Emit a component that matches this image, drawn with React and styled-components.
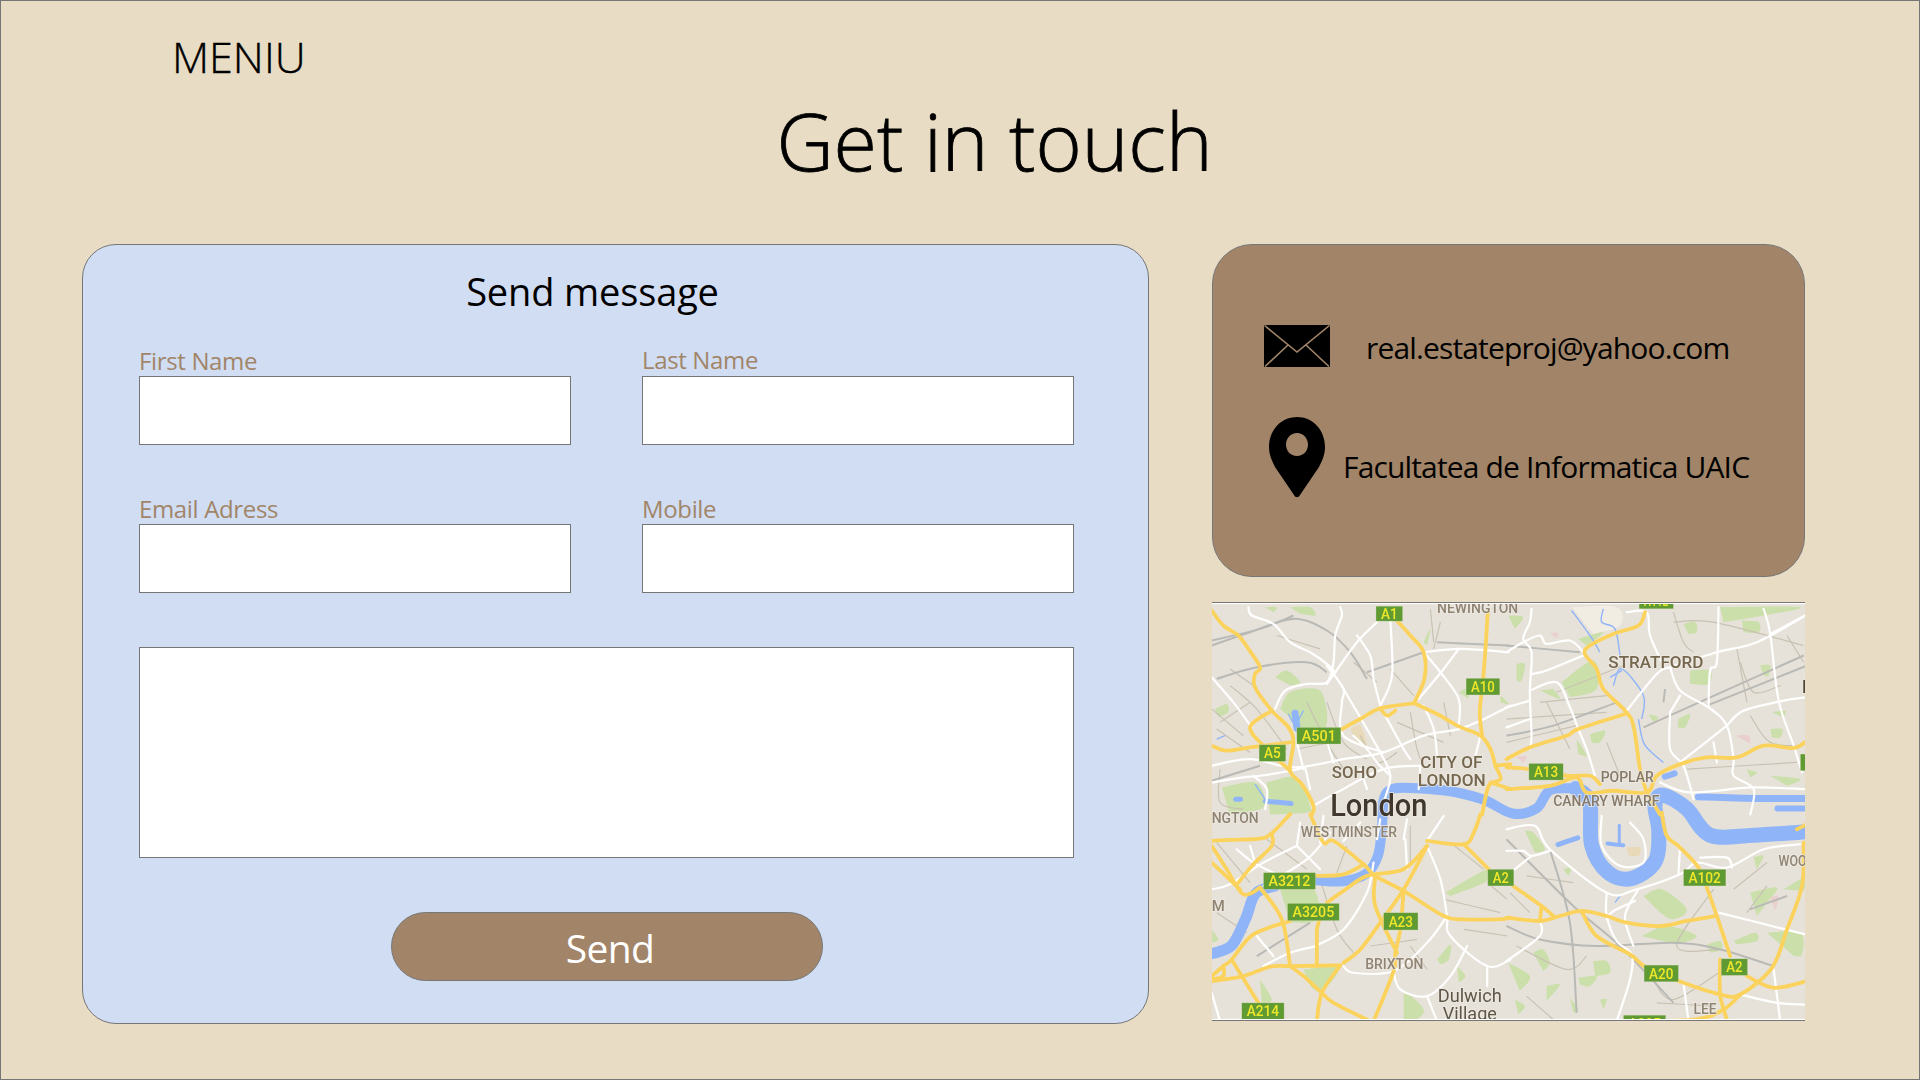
import React from 'react';
import styled, { createGlobalStyle } from 'styled-components';

const FONT = '"Open Sans", "Noto Sans", sans-serif';
const BROWN = '#a28568';
const LINE = '#767676';

const GlobalStyle = createGlobalStyle`
  html, body {
    margin: 0;
    padding: 0;
    background: #e8dcc5;
  }
  * {
    box-sizing: border-box;
  }
`;

// Styled components

const Page = styled.div`
  width: 1920px;
  height: 1080px;
  overflow: hidden;
  border: 1px solid ${LINE};
  background: #e8dcc5;
  font-family: ${FONT};
  color: #000;
`;

const Menu = styled.div`
  height: 64px;
  padding: 25px 0 0 171px;
  font-size: 43px;
  font-weight: 300;
  -webkit-text-stroke: 0.4px #000;
  line-height: 62px;
  letter-spacing: 0;
`;

const Title = styled.h1`
  margin: 0;
  padding: 24px 0 0 69px;
  height: 179px;
  font-size: 79px;
  font-weight: 300;
  -webkit-text-stroke: 0.8px #000;
  line-height: 104px;
  letter-spacing: 0;
  text-align: center;
`;

const Content = styled.main`
  display: grid;
  grid-template-columns: 1067px 593px;
  column-gap: 63px;
  padding-left: 81px;
`;

const FormCard = styled.form`
  display: flex;
  flex-direction: column;
  height: 780px;
  padding: 21px 0 0 56px;
  border: 1px solid ${LINE};
  border-radius: 34px;
  background: #d0ddf3;
`;

const FormTitle = styled.h2`
  width: 935px;
  margin: 0;
  padding-right: 28px;
  height: 80px;
  font-size: 38px;
  font-weight: 400;
  line-height: 50px;
  letter-spacing: -0.15px;
  text-align: center;
`;

const FieldGrid = styled.div`
  display: grid;
  grid-template-columns: 432px 432px;
  column-gap: 71px;
  row-gap: 49px;
`;

const Field = styled.label`
  display: flex;
  flex-direction: column;
`;

const LabelText = styled.span`
  height: 30px;
  font-size: 24px;
  line-height: 30px;
  letter-spacing: -0.35px;
  color: ${BROWN};
  transform: translateY(${({ $lift }) => ($lift ? -1 : 0)}px);
`;

const Input = styled.input`
  display: block;
  width: 432px;
  height: 69px;
  border: 1px solid ${LINE};
  border-radius: 0;
  background: #fff;
  outline: none;
`;

const Message = styled.textarea`
  display: block;
  width: 935px;
  height: 211px;
  margin-top: 54px;
  border: 1px solid ${LINE};
  border-radius: 0;
  background: #fff;
  outline: none;
  resize: none;
`;

const SendButton = styled.button`
  display: block;
  width: 432px;
  height: 69px;
  margin: 54px 0 0 252px;
  padding: 2px 0 0 6px;
  border: 1px solid ${LINE};
  border-radius: 35px;
  background: ${BROWN};
  color: #fff;
  font-family: ${FONT};
  font-size: 39px;
  line-height: 66px;
  letter-spacing: -0.6px;
`;

const Aside = styled.aside`
  display: flex;
  flex-direction: column;
  gap: 25px;
`;

const InfoCard = styled.section`
  display: flex;
  flex-direction: column;
  height: 333px;
  padding-top: 71px;
  border: 1px solid ${LINE};
  border-radius: 40px;
  background: ${BROWN};
`;

const InfoRow = styled.div`
  display: flex;
  align-items: ${({ $end }) => ($end ? 'flex-end' : 'center')};
  gap: ${({ $gap }) => $gap}px;
  height: ${({ $height }) => $height}px;
  padding-left: ${({ $left }) => $left}px;
`;

const InfoText = styled.span`
  font-size: 30px;
  line-height: 44px;
  letter-spacing: -0.85px;
  white-space: nowrap;
  position: relative;
  top: ${({ $shift }) => $shift || 0}px;
`;

const MapFrame = styled.figure`
  width: 593px;
  height: 419px;
  margin: 0;
  padding: 1px 0;
  border-top: 1px solid ${LINE};
  border-bottom: 1px solid ${LINE};
  background: #fff;
  overflow: hidden;

  svg {
    display: block;
  }
`;

// Map drawing. Points are read off crops of the map at 3x. Lists with
// a, b, c, d come from the four quarter crops, z from the whole-map crop.

const ORIGIN = { a: [-2, -2], b: [294, -2], c: [-2, 208], d: [294, 208] };

const toMap = (q, x, y) =>
  q === 'z'
    ? [(x - 30) / 2.533, (y - 38) / 3]
    : [ORIGIN[q][0] + x / 3, ORIGIN[q][1] + y / 3];

const parse = (line) => {
  const [q, ...rest] = line.trim().split(/\s+/);
  return rest.map((p) => {
    const [x, y] = p.split(',').map(Number);
    return toMap(q, x, y);
  });
};

const smooth = (pts) => {
  let d = `M${pts[0][0].toFixed(1)} ${pts[0][1].toFixed(1)}`;
  for (let i = 0; i < pts.length - 1; i++) {
    const p0 = pts[i - 1] || pts[i];
    const p1 = pts[i];
    const p2 = pts[i + 1];
    const p3 = pts[i + 2] || p2;
    const c1 = [p1[0] + (p2[0] - p0[0]) / 6, p1[1] + (p2[1] - p0[1]) / 6];
    const c2 = [p2[0] - (p3[0] - p1[0]) / 6, p2[1] - (p3[1] - p1[1]) / 6];
    d += `C${c1[0].toFixed(1)} ${c1[1].toFixed(1)} ${c2[0].toFixed(1)} ${c2[1].toFixed(1)} ${p2[0].toFixed(1)} ${p2[1].toFixed(1)}`;
  }
  return d;
};

const area = (line) => smooth(parse(line)) + 'Z';

const PARKS = [
  'a 210,320 240,270 320,260 345,300 345,375 270,380 235,340',
  'a 195,225 230,205 270,240 240,250',
  'a 15,320 50,305 55,330 25,345',
  'a 165,15 200,15 190,30',
  'a 240,15 300,15 315,40 270,35',
  'a 35,555 135,540 165,590 150,620 60,636',
  'a 170,540 260,525 300,610 290,630 180,636',
  'a 640,120 660,80 650,130',
  'a 745,270 770,260 775,290',
  'a 870,280 895,305 870,300',
  'b 165,240 260,175 270,260 190,285',
  'b 100,265 160,290 140,260',
  'b 215,110 290,90 240,130',
  'b 530,65 565,60 570,90 545,95',
  'b 705,55 755,60 755,90 710,90',
  'b 640,15 880,15 770,40 650,60',
  'b 550,205 610,205 605,245 550,245',
  'b 515,350 550,335 535,375 512,375',
  'b 30,185 55,185 45,235 30,235',
  'b 250,395 295,385 280,420 255,420',
  'b 425,335 455,345 440,360',
  'b 760,190 790,190 785,220 770,220',
  'b 790,380 825,380 820,405 795,405',
  'b 795,330 835,325 830,345',
  'b 210,410 240,460 215,455',
  'b 720,500 750,510 730,525',
  'b 790,520 880,530 840,550',
  'b 5,40 50,45 25,80',
  'c 210,230 310,230 320,320 240,330',
  'c 280,470 385,465 335,535 300,520',
  'c 580,530 640,590 610,625 580,625',
  'c 680,440 720,395 715,440 690,455',
  'c 740,460 765,490 745,510',
  'c 705,240 830,170 830,205 720,250',
  'c 150,500 185,560 155,570',
  'c 5,350 25,380 5,390',
  'd 410,250 465,230 540,290 500,320 460,300',
  'd 405,370 480,340 570,370 510,395',
  'd 55,55 80,60 115,110 85,120',
  'd 170,170 195,165 185,190',
  'd 80,420 110,410 130,450 110,475',
  'd 5,450 70,490 40,535',
  'd 215,495 270,490 250,520 220,515',
  'd 260,445 300,445 310,480 265,490',
  'd 25,560 55,580 35,605',
  'd 120,520 160,515 120,565',
  'd 190,555 215,590 200,600',
  'd 280,560 300,560 290,590',
  'd 730,240 810,225 780,270 750,310',
  'd 830,230 895,195 890,235',
  'd 680,385 745,360 750,385 690,395',
  'd 600,395 640,385 645,410 610,420',
  'd 780,360 880,360 885,425 860,430',
  'd 740,135 770,130 750,170',
];

const WATER = [
  ['z 30,1085 80,1060 115,980 140,905 190,882', 11],
  ['z 295,865 360,868 420,845 450,790 460,700 465,620 490,590 560,590 640,600 720,625 790,665 850,650 885,595 950,590', 10],
  ['z 950,590 985,630 990,760 1030,840 1090,860 1150,810 1160,720 1150,640 1170,610 1230,650 1290,730 1400,730 1530,720', 15],
  ['z 1260,615 1400,620 1530,620', 7],
  ['z 1460,650 1530,650', 6],
  ['z 1030,755 1070,760', 4],
  ['z 1060,700 1060,755', 3],
  ['z 905,758 955,738', 5],
  ['z 240,365 245,410', 7],
  ['z 165,628 230,635', 5],
  ['z 90,622 102,622', 5],
  ['z 1175,555 1200,545', 6],
];

const CANALS = [
  'b 195,25 250,100 280,150',
  'b 290,20 285,60 325,80 340,160',
  'b 320,250 345,200 410,280 405,350',
  'b 395,350 410,420 440,455 470,480',
  'b 310,225 345,205',
  'a 135,545 165,590',
  'a 20,410 45,400',
  'd 340,250 325,270',
  'a 235,335 255,365 280,325',
];

const GRAY = [
  'a 5,130 120,90 250,50 350,85 420,150 470,230',
  'a 5,115 150,80 250,40',
  'a 20,230 140,195 290,180 350,210',
  'a 470,210 640,150',
  'a 5,535 150,490',
  'a 680,120 895,130',
  'b 0,130 220,150',
  'b 410,375 890,160',
  'b 0,400 140,370 330,300',
  'b 900,190 600,310',
  'b 475,260 470,300',
  'c 140,430 300,330',
  'd 0,80 200,280 340,400 500,570',
  'd 130,110 190,330 210,600',
  'd 0,340 100,380 270,400 500,390 640,410 800,460',
  'd 840,250 730,290',
];

const MINOR = [
  'a 60,250 140,320 230,440',
  'a 30,360 120,300',
  'a 350,300 400,420 470,470',
  'a 450,400 500,480 560,450',
  'a 600,330 620,440 640,490',
  'a 690,60 670,140',
  'a 540,200 610,280',
  'a 5,320 100,400',
  'a 20,380 120,450',
  'a 60,200 130,250',
  'a 200,100 330,140',
  'a 290,300 350,420 400,500',
  'a 430,180 500,240',
  'a 660,20 670,120',
  'a 700,300 720,400',
  'a 260,440 360,420',
  'a 560,360 700,420',
  'a 30,500 30,600 100,620',
  'b 150,270 350,190',
  'b 100,300 300,280',
  'b 0,350 300,330',
  'b 500,60 620,60 890,130',
  'b 690,140 720,300',
  'b 730,340 790,420 890,430',
  'b 300,420 340,520',
  'b 540,500 870,480',
  'b 500,30 530,120 560,150',
  'b 120,300 190,440',
  'b 0,420 210,370',
  'b 700,180 740,270 820,250',
  'b 840,100 890,180',
  'c 330,200 380,350 430,420',
  'c 20,300 110,360',
  'c 600,40 600,150',
  'c 700,260 870,300',
  'c 480,400 620,380',
  'c 720,90 820,170',
  'c 830,210 890,260',
  'c 410,100 380,180',
  'c 20,90 120,210',
  'c 170,80 290,170',
  'c 600,400 650,470',
  'c 760,350 890,370',
  'd 30,400 180,470 240,430',
  'd 440,500 500,560 650,470',
  'd 620,230 510,400 640,410',
  'd 780,150 680,230',
  'd 60,550 140,620',
  'd 450,570 620,580',
  'd 720,300 780,220',
  'd 60,190 200,210',
  'd 10,240 70,300',
];

const WHITE = [
  'a 115,15 125,40 190,65 240,120 300,150 350,185 375,210',
  'a 390,15 395,40 375,100 370,180 350,240 290,245 225,265 195,320',
  'a 500,60 440,120 375,210 350,245',
  'a 440,100 480,160 490,230 510,310',
  'a 540,50 545,220 510,310',
  'a 350,190 400,260 395,300 400,400 520,450',
  'a 5,225 70,300 125,375',
  'a 640,150 690,210 745,290 745,370',
  'a 640,150 750,140 895,150',
  'a 745,140 700,200 625,290',
  'a 5,490 120,470 250,495 400,470 520,450 640,400 745,380 810,355 900,310',
  'a 5,540 100,525 150,520 240,505 285,495',
  'a 640,310 670,380 680,460',
  'a 525,340 580,440 600,470',
  'a 510,450 540,520 520,600',
  'a 130,520 170,560 165,620',
  'a 260,420 280,500',
  'a 345,400 370,480',
  'a 310,610 380,570 520,500 640,490',
  'a 810,400 790,480',
  'a 630,490 625,560',
  'a 400,260 470,380 510,450',
  'a 430,400 470,440 500,480 540,520',
  'a 285,495 300,560',
  'a 450,500 470,560',
  'b 75,20 70,60 50,110 75,150 70,270 75,400 70,440',
  'b 0,150 50,120 100,100 120,125 190,115 235,155',
  'b 75,215 120,205 230,160',
  'b 70,265 150,240 190,315 215,380 240,440 265,520',
  'b 0,315 70,295',
  'b 0,375 70,350',
  'b 360,325 450,215 490,195',
  'b 490,195 630,150 750,120 895,40',
  'b 635,15 630,180 610,205 605,315',
  'b 490,195 520,265 605,315 660,370 680,470 680,520 740,560 730,636',
  'b 490,330 520,280',
  'b 490,330 490,440 530,490 560,590',
  'b 660,370 520,480',
  'b 660,370 710,325 830,295 895,285',
  'b 770,20 790,95 815,295 860,430 885,510',
  'b 790,95 895,40',
  'b 460,540 550,570 735,555 895,560',
  'b 360,30 420,30 430,100 470,190',
  'b 620,420 630,480',
  'c 5,230 60,215 160,150 260,100',
  'c 120,100 135,150',
  'c 260,100 330,170',
  'c 315,400 400,350 470,240 490,150',
  'c 160,460 240,420 320,400',
  'c 5,540 30,625',
  'c 400,460 430,480 550,475 650,390 710,310',
  'c 650,100 690,200 710,310 720,370 830,460 900,440',
  'c 550,475 570,530 650,550 720,490 770,400',
  'c 650,550 680,625',
  'c 830,460 830,520',
  'c 700,10 650,85',
  'c 585,80 590,170',
  'c 140,370 190,430',
  'c 360,60 290,140 160,220',
  'c 500,80 510,20',
  'c 590,20 580,80',
  'c 270,30 260,100',
  'c 330,90 340,10',
  'c 400,85 450,30',
  'c 80,110 130,150 210,190',
  'd 0,50 85,40 130,110 300,240 390,230 520,185 570,150 660,165 770,110 880,95',
  'd 0,115 50,115 75,130 130,115',
  'd 0,190 75,130',
  'd 300,240 300,310 330,385 375,425 370,500 330,625',
  'd 395,230 355,310 380,400',
  'd 385,265 320,295 300,320',
  'd 100,325 100,370 0,445',
  'd 520,100 515,185',
  'd 580,135 660,135 675,165',
  'd 635,300 895,365',
  'd 530,510 545,625',
  'd 700,545 810,570 895,575',
  'd 800,470 820,625',
  'd 285,10 285,100 340,160 410,150 410,80 370,30',
];

const YELLOW = [
  'a 5,25 40,70 85,100 115,140 150,195 135,215 135,255 185,325 235,375 250,420 240,505 275,545 310,610 305,636',
  'a 185,325 120,375 170,440 240,505',
  'a 5,430 50,445 120,435 240,420',
  'a 395,380 450,350 510,318 610,303',
  'a 555,50 600,100 640,150 642,230 612,300',
  'a 612,303 680,335 745,372 810,400 840,440 855,490 870,530 835,550 815,636',
  'a 832,30 825,140 818,230 808,330 815,400',
  'a 855,490 900,485',
  'a 840,540 900,560',
  'a 510,318 530,340 555,325',
  'b 415,30 395,70 320,95 250,130 235,155 270,200 290,260 355,325 380,370 400,500 420,570',
  'b 0,470 70,435 180,400 215,380 355,335',
  'b 0,495 70,500 180,520 250,520 280,545',
  'b 0,560 130,550 210,525 240,570 320,565 420,570 450,520 520,485 600,465 690,465 770,430 860,437 900,415',
  'b 420,570 460,636',
  'c 5,85 60,82 150,78 185,62 240,5',
  'c 185,65 185,100 130,155 85,210',
  'c 5,100 50,170 100,245 150,225',
  'c 5,150 90,230',
  'c 150,225 215,320 240,460',
  'c 300,5 340,90 370,85 460,155 495,190 580,235 700,310 760,320 860,320 900,315',
  'c 320,190 400,185 460,155',
  'c 240,325 130,365 65,440 40,460 5,490',
  'c 40,460 40,490 5,500',
  'c 65,440 95,490 145,570',
  'c 5,505 100,490 180,462 240,460 390,458',
  'c 240,460 280,490 335,540 370,570 480,625',
  'c 390,458 335,540 320,625',
  'c 320,350 320,460',
  'c 350,270 400,235 470,190 580,170 650,100',
  'c 320,350 330,310',
  'c 650,100 580,230 510,330 450,410 400,450',
  'c 495,190 495,280 560,420',
  'c 580,235 570,350 555,420 550,475 490,625',
  'c 650,85 760,95 790,60 810,5',
  'c 760,95 835,170',
  'd 465,0 480,70 520,105 575,165 600,225 630,310 670,430',
  'd 0,315 100,325 160,310 225,295 300,310 360,330 460,340 540,325 630,310',
  'd 20,220 105,280 140,310',
  'd 105,280 100,325',
  'd 225,295 270,370 370,425 420,465 530,510 640,545 700,545 795,465 840,350 885,220 890,90',
  'd 640,440 640,545 660,620',
  'd 720,490 800,525 900,505',
  'd 700,545 650,590 560,620 320,628',
  'd 870,50 890,40 900,35',
];

const SHIELDS = [
  ['A1', 'a', 497, 12, 577, 57],
  ['A10', 'a', 767, 228, 868, 278],
  ['A501', 'a', 260, 375, 392, 425],
  ['A5', 'a', 147, 427, 227, 477],
  ['A13', 'b', 67, 483, 170, 533],
  ['A112', 'b', 397, -30, 500, 20],
  ['A1', 'b', 880, 455, 960, 505],
  ['A3212', 'c', 160, 180, 316, 230],
  ['A3205', 'c', 232, 272, 387, 324],
  ['A23', 'c', 520, 300, 623, 352],
  ['A2', 'c', 832, 170, 910, 220],
  ['A214', 'c', 95, 570, 222, 620],
  ['A102', 'd', 530, 170, 657, 220],
  ['A2', 'd', 643, 438, 722, 488],
  ['A20', 'd', 412, 457, 515, 507],
  ['A205', 'd', 350, 607, 477, 657],
];

// text, crop, left x, baseline, width, font size, colour, weight
const LABELS = [
  ['SOHO', 'a', 365, 527, 45, 17, '#75674f', 500],
  ['CITY OF', 'a', 630, 498, 62, 17, '#75674f', 500],
  ['LONDON', 'a', 622, 550, 68, 17, '#75674f', 500],
  ['NEWINGTON', 'a', 680, 33, 81, 15, '#8f8473', 500],
  ['STRATFORD', 'b', 305, 197, 95, 17, '#75674f', 500],
  ['POPLAR', 'b', 282, 538, 53, 14, '#85796a', 500],
  ['CANARY WHARF', 'b', 140, 612, 106, 14, '#85796a', 500],
  ['E', 'b', 885, 273, 10, 18, '#4f4838', 500],
  ['WESTMINSTER', 'c', 272, 73, 96, 14, '#8f8473', 500],
  ['NGTON', 'c', 5, 30, 47, 14, '#8f8473', 500],
  ['M', 'c', 5, 295, 13, 14, '#8f8473', 500],
  ['BRIXTON', 'c', 465, 470, 58, 14, '#8f8473', 500],
  ['Dulwich', 'c', 682, 568, 64, 18, '#5f5747', 400],
  ['Village', 'c', 697, 620, 54, 18, '#5f5747', 400],
  ['LEE', 'd', 560, 605, 23, 14, '#8f8473', 500],
  ['WOO', 'd', 815, 160, 28, 14, '#8f8473', 500],
];

const LondonMap = () => (
  <svg width="593" height="415" viewBox="0 0 592 414" role="img" aria-label="Map of London">
    <defs>
      <filter id="soft" x="-2%" y="-2%" width="104%" height="104%">
        <feGaussianBlur stdDeviation="0.65" />
      </filter>
      <filter id="softText" x="-5%" y="-5%" width="110%" height="110%">
        <feGaussianBlur stdDeviation="0.35" />
      </filter>
    </defs>
    <rect width="592" height="414" fill="#e7e2d9" />
    <g filter="url(#soft)">
      <path d={area('b 195,15 330,15 340,70 260,95')} fill="#f1ede3" />
      <path d={area('a 420,380 450,370 470,430 440,420')} fill="#e8d9b8" />
      <path d={area('d 360,105 400,105 395,130 365,128')} fill="#e8d9b8" />
      <path d={area('d 790,255 815,250 805,295')} fill="#e9cfcd" />
      <path d={area('b 130,92 155,92 150,108')} fill="#e9cfcd" />
      <path d={area('b 30,462 60,462 50,482')} fill="#e9cfcd" />
      <path d={area('b 688,400 725,400 730,425')} fill="#e9cfcd" />
      {PARKS.map((p) => (
        <path key={p} d={area(p)} fill="#cbdfab" />
      ))}
      {MINOR.map((r) => (
        <path key={r} d={smooth(parse(r))} fill="none" stroke="#c8c2b4" strokeWidth="1.2" />
      ))}
      {GRAY.map((r) => (
        <path key={r} d={smooth(parse(r))} fill="none" stroke="#b9b9b6" strokeWidth="2" />
      ))}
      {WATER.map(([r, w]) => (
        <path key={r} d={smooth(parse(r))} fill="none" stroke="#8fb5f8" strokeWidth={w} strokeLinecap="round" strokeLinejoin="round" />
      ))}
      {CANALS.map((r) => (
        <path key={r} d={smooth(parse(r))} fill="none" stroke="#8fb5f8" strokeWidth="1.4" />
      ))}
      {WHITE.map((r) => (
        <path key={r} d={smooth(parse(r))} fill="none" stroke="#fff" strokeWidth="2.2" strokeLinecap="round" strokeLinejoin="round" />
      ))}
      {YELLOW.map((r) => (
        <path key={r} d={smooth(parse(r))} fill="none" stroke="#fbd35c" strokeWidth="3.8" strokeLinecap="round" strokeLinejoin="round" />
      ))}
    </g>
    <g filter="url(#softText)">
      {LABELS.map(([text, q, x, y, width, size, color, weight]) => {
        const [mx, my] = toMap(q, x, y);
        return (
          <text
            key={text}
            x={mx}
            y={my}
            fill={color}
            fontFamily="Roboto, sans-serif"
            fontSize={size}
            fontWeight={weight}
            textLength={width}
            lengthAdjust="spacingAndGlyphs"
            stroke="#eeeae2"
            strokeOpacity="0.7"
            strokeWidth="2"
            paintOrder="stroke"
          >
            {text}
          </text>
        );
      })}
      <text
        x="118"
        y="212"
        fill="#3f392e"
        fontFamily="Roboto, sans-serif"
        fontSize="31"
        fontWeight="500"
        textLength="97"
        lengthAdjust="spacingAndGlyphs"
        stroke="#eeeae2"
        strokeOpacity="0.7"
        strokeWidth="2"
        paintOrder="stroke"
      >
        London
      </text>
      {SHIELDS.map(([text, q, x1, y1, x2, y2]) => {
        const [mx, my] = toMap(q, x1, y1);
        const w = (x2 - x1) / 3;
        const h = (y2 - y1) / 3;
        return (
          <g key={`${text}${x1}`}>
            <rect x={mx} y={my} width={w} height={h} fill="#5f9a33" stroke="#e8e4d2" strokeOpacity="0.5" strokeWidth="0.6" />
            <text
              x={mx + w / 2}
              y={my + h / 2 + 5.2}
              fill="#efe82c"
              fontFamily="Roboto, sans-serif"
              fontSize="15"
              fontWeight="500"
              textAnchor="middle"
              textLength={w - 10}
              lengthAdjust="spacingAndGlyphs"
            >
              {text}
            </text>
          </g>
        );
      })}
    </g>
  </svg>
);

const MailIcon = () => (
  <svg width="66" height="42" viewBox="0 0 66 42">
    <rect width="66" height="42" fill="#000" />
    <path d="M0.5 0.5 L33 27 L65.5 0.5 M1 41.5 L24 20 M65 41.5 L42 20" fill="none" stroke={BROWN} strokeWidth="1.6" />
  </svg>
);

const PinIcon = () => (
  <svg width="56" height="81" viewBox="0 0 56 81">
    <path
      fillRule="evenodd"
      d="M28 0 C44 0 56 13 56 30 C56 38 53 44 50 50 L31 78 C29.5 81 26.5 81 25 78 L6 50 C3 44 0 38 0 30 C0 13 12 0 28 0 Z M28 16 C21.5 16 17 21.500 17 27.500 C17 34 21.500 39 28 39 C34.500 39 39 34 39 27.500 C39 21.500 34.500 16 28 16 Z"
      fill="#000"
    />
  </svg>
);

const App = () => (
  <Page>
    <GlobalStyle />
    <Menu>MENIU</Menu>
    <Title>Get in touch</Title>
    <Content>
      <FormCard>
        <FormTitle>Send message</FormTitle>
        <FieldGrid>
          <Field>
            <LabelText>First Name</LabelText>
            <Input type="text" />
          </Field>
          <Field>
            <LabelText $lift>Last Name</LabelText>
            <Input type="text" />
          </Field>
          <Field>
            <LabelText>Email Adress</LabelText>
            <Input type="text" />
          </Field>
          <Field>
            <LabelText>Mobile</LabelText>
            <Input type="text" />
          </Field>
        </FieldGrid>
        <Message />
        <SendButton type="button">Send</SendButton>
      </FormCard>
      <Aside>
        <InfoCard>
          <InfoRow $left={51} $gap={36} $height={60}>
            <MailIcon />
            <InfoText $shift={2}>real.estateproj@yahoo.com</InfoText>
          </InfoRow>
          <InfoRow $left={56} $gap={18} $height={122} $end>
            <PinIcon />
            <InfoText $shift={-9}>Facultatea de Informatica UAIC</InfoText>
          </InfoRow>
        </InfoCard>
        <MapFrame>
          <LondonMap />
        </MapFrame>
      </Aside>
    </Content>
  </Page>
);

export default App;
